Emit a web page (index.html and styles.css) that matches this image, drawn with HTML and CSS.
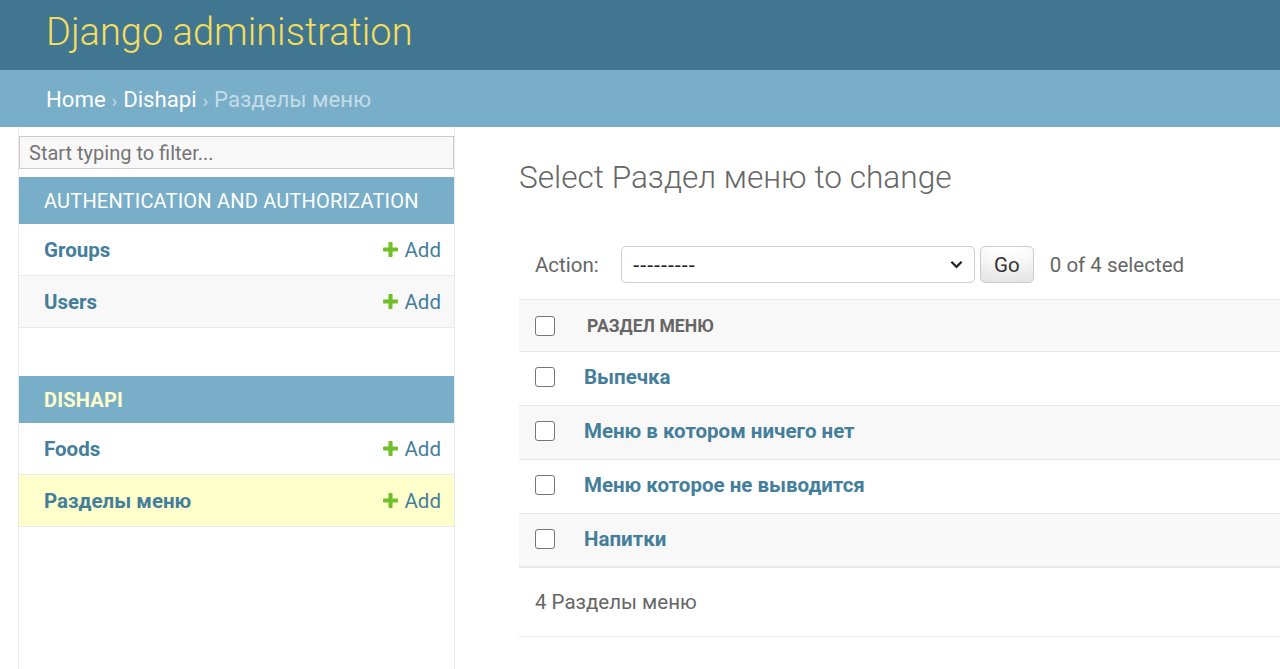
FILE: index.html
```html
<!DOCTYPE html>
<html lang="ru">
<head>
<meta charset="utf-8">
<title>Select Раздел меню to change | Django site admin</title>
<link rel="stylesheet" href="styles.css">
</head>
<body>
<header class="header">
  <h1 class="branding">Django administration</h1>
</header>
<div class="breadcrumbs">
  <a href="#">Home</a><span class="sep">›</span><a href="#">Dishapi</a><span class="sep">›</span><span>Разделы меню</span>
</div>
<div class="main">
  <div class="toggle"></div>
  <nav class="sidebar">
    <input class="nav-filter" type="search" placeholder="Start typing to filter...">
    <div class="module">
      <div class="caption">AUTHENTICATION AND AUTHORIZATION</div>
      <div class="mrow">
        <a class="mname" href="#">Groups</a>
        <a class="addlink" href="#"><svg class="plus" viewBox="0 0 1792 1792"><path fill="#70bf2b" d="M1600 796v192q0 40-28 68t-68 28h-416v416q0 40-28 68t-68 28h-192q-40 0-68-28t-28-68v-416h-416q-40 0-68-28t-28-68v-192q0-40 28-68t68-28h416v-416q0-40 28-68t68-28h192q40 0 68 28t28 68v416h416q40 0 68 28t28 68z"/></svg>Add</a>
      </div>
      <div class="mrow alt">
        <a class="mname" href="#">Users</a>
        <a class="addlink" href="#"><svg class="plus" viewBox="0 0 1792 1792"><path fill="#70bf2b" d="M1600 796v192q0 40-28 68t-68 28h-416v416q0 40-28 68t-68 28h-192q-40 0-68-28t-28-68v-416h-416q-40 0-68-28t-28-68v-192q0-40 28-68t68-28h416v-416q0-40 28-68t68-28h192q40 0 68 28t28 68v416h416q40 0 68 28t28 68z"/></svg>Add</a>
      </div>
    </div>
    <div class="module">
      <div class="caption current">DISHAPI</div>
      <div class="mrow">
        <a class="mname" href="#">Foods</a>
        <a class="addlink" href="#"><svg class="plus" viewBox="0 0 1792 1792"><path fill="#70bf2b" d="M1600 796v192q0 40-28 68t-68 28h-416v416q0 40-28 68t-68 28h-192q-40 0-68-28t-28-68v-416h-416q-40 0-68-28t-28-68v-192q0-40 28-68t68-28h416v-416q0-40 28-68t68-28h192q40 0 68 28t28 68v416h416q40 0 68 28t28 68z"/></svg>Add</a>
      </div>
      <div class="mrow selected">
        <a class="mname" href="#">Разделы меню</a>
        <a class="addlink" href="#"><svg class="plus" viewBox="0 0 1792 1792"><path fill="#70bf2b" d="M1600 796v192q0 40-28 68t-68 28h-416v416q0 40-28 68t-68 28h-192q-40 0-68-28t-28-68v-416h-416q-40 0-68-28t-28-68v-192q0-40 28-68t68-28h416v-416q0-40 28-68t68-28h192q40 0 68 28t28 68v416h416q40 0 68 28t28 68z"/></svg>Add</a>
      </div>
    </div>
  </nav>
  <main class="content">
    <h1 class="title">Select Раздел меню to change</h1>
    <div class="changelist">
      <div class="actions">
        <label class="action-label">Action:</label>
        <div class="select-box">
          <select class="action-select"><option>---------</option></select>
          <svg class="chevron" viewBox="0 0 14 9"><path d="M1.5 1.5 7 7l5.5-5.5" fill="none" stroke="#222" stroke-width="2.4"/></svg>
        </div>
        <button class="go" type="button">Go</button>
        <span class="counter">0 of 4 selected</span>
      </div>
      <div class="results">
        <div class="thead">
          <span class="cb"></span>
          <span class="th-text">РАЗДЕЛ МЕНЮ</span>
        </div>
        <div class="tr"><span class="cb"></span><a class="rlink" href="#">Выпечка</a></div>
        <div class="tr alt"><span class="cb"></span><a class="rlink" href="#">Меню в котором ничего нет</a></div>
        <div class="tr"><span class="cb"></span><a class="rlink" href="#">Меню которое не выводится</a></div>
        <div class="tr alt last"><span class="cb"></span><a class="rlink" href="#">Напитки</a></div>
      </div>
      <p class="paginator">4 Разделы меню</p>
    </div>
  </main>
</div>
</body>
</html>
```

FILE: styles.css
```css
* { box-sizing: border-box; }

body {
  margin: 0;
  font-family: Roboto, "Noto Sans", sans-serif;
  color: #333;
  background: #fff;
}

a { text-decoration: none; }

.header {
  height: 70px;
  padding: 10px 46px 0;
  background: #417690;
}

.branding {
  margin: 0;
  font-size: 38px;
  line-height: 44px;
  font-weight: 300;
  color: #f5dd5d;
}

.breadcrumbs {
  height: 57px;
  padding: 16px 46px 0;
  background: #79aec8;
  color: #c4dce8;
  font-size: 22.2px;
  line-height: 26px;
}

.breadcrumbs a { color: #fff; }

.sep { margin: 0 6px; font-size: 18px; }

.main {
  display: flex;
  min-height: calc(100vh - 127px);
}

.toggle {
  flex: 0 0 19px;
  border-right: 1px solid #eaeaea;
}

.sidebar {
  flex: 0 0 436px;
  border-right: 1px solid #eaeaea;
  padding-top: 9px;
}

.nav-filter {
  display: block;
  width: 100%;
  height: 33px;
  margin: 0 0 8px;
  padding: 2px 9px;
  border: 1px solid #ccc;
  background: #f8f8f8;
  font-family: Roboto, sans-serif;
  font-size: 20px;
  color: #333;
  outline: none;
  -webkit-appearance: none;
}

.nav-filter::placeholder { color: #757575; }

.module { margin-bottom: 48px; }

.caption {
  height: 47px;
  display: flex;
  align-items: center;
  padding-left: 25px;
  background: #79aec8;
  color: #fff;
  font-size: 20px;
  letter-spacing: 0.2px;
}

.caption.current {
  color: #ffc;
  font-weight: 700;
}

.mrow {
  height: 52px;
  display: flex;
  align-items: center;
  justify-content: space-between;
  padding: 0 13px 0 25px;
  border-bottom: 1px solid #eaeaea;
  background: #fff;
}

.mrow.alt { background: #f8f8f8; }
.mrow.selected { background: #ffc; }

.mname {
  color: #447e9b;
  font-weight: 700;
  font-size: 20.5px;
}

.addlink {
  display: flex;
  align-items: center;
  color: #447e9b;
  font-size: 20.5px;
}

.plus {
  width: 19px;
  height: 19px;
  margin-right: 5px;
}

.content {
  flex: 1;
  padding: 32px 0 0 64px;
  min-width: 0;
}

.title {
  margin: 0;
  font-size: 31.6px;
  line-height: 37px;
  font-weight: 300;
  color: #666;
}

.changelist { margin-top: 34px; }

.actions {
  height: 69px;
  display: flex;
  align-items: center;
  padding-left: 16px;
  color: #666;
  font-size: 20.5px;
}

.action-label { margin-right: 22px; }

.select-box {
  width: 354px;
  height: 37px;
  display: flex;
  align-items: center;
  border: 1px solid #ccc;
  border-radius: 5px;
  background: #fff;
  padding: 0 6px 0 11px;
}

.action-select {
  flex: 1;
  border: none;
  background: transparent;
  -webkit-appearance: none;
  appearance: none;
  font-family: "Liberation Sans", Arial, sans-serif;
  font-size: 20.8px;
  color: #222;
  padding: 0;
  outline: none;
}

.chevron {
  width: 13px;
  height: 9px;
  margin-right: 5px;
}

.go {
  margin-left: 5px;
  width: 54px;
  height: 37px;
  border: 1px solid #ccc;
  border-radius: 5px;
  background: #fff;
  box-shadow: inset 0 -24px 30px -16px rgba(0, 0, 0, 0.15);
  font-family: Roboto, sans-serif;
  font-size: 20.5px;
  color: #333;
  padding: 0;
}

.counter { margin-left: 16px; }

.results { width: 100%; }

.thead {
  height: 53px;
  display: flex;
  align-items: center;
  padding-left: 16px;
  background: #f8f8f8;
  border-top: 1px solid #e8e8e8;
  border-bottom: 1px solid #e8e8e8;
}

.th-text {
  margin-left: 32px;
  color: #666;
  font-weight: 700;
  font-size: 17.6px;
}

.cb {
  flex: 0 0 20px;
  width: 20px;
  height: 20px;
  border: 1.6px solid #767676;
  border-radius: 3px;
  background: #fff;
}

.tr {
  height: 54px;
  display: flex;
  align-items: center;
  padding: 0 0 3px 16px;
  border-bottom: 1px solid #e8e8e8;
  background: #fff;
}

.tr.alt { background: #f8f8f8; }
.tr.last { border-bottom: 2px solid #e8e8e8; }

.rlink {
  margin-left: 29px;
  color: #447e9b;
  font-weight: 700;
  font-size: 20.5px;
}

.paginator {
  margin: 0;
  height: 69px;
  display: flex;
  align-items: center;
  padding-left: 16px;
  border-bottom: 1px solid #e8e8e8;
  color: #666;
  font-size: 20.5px;
}
```
